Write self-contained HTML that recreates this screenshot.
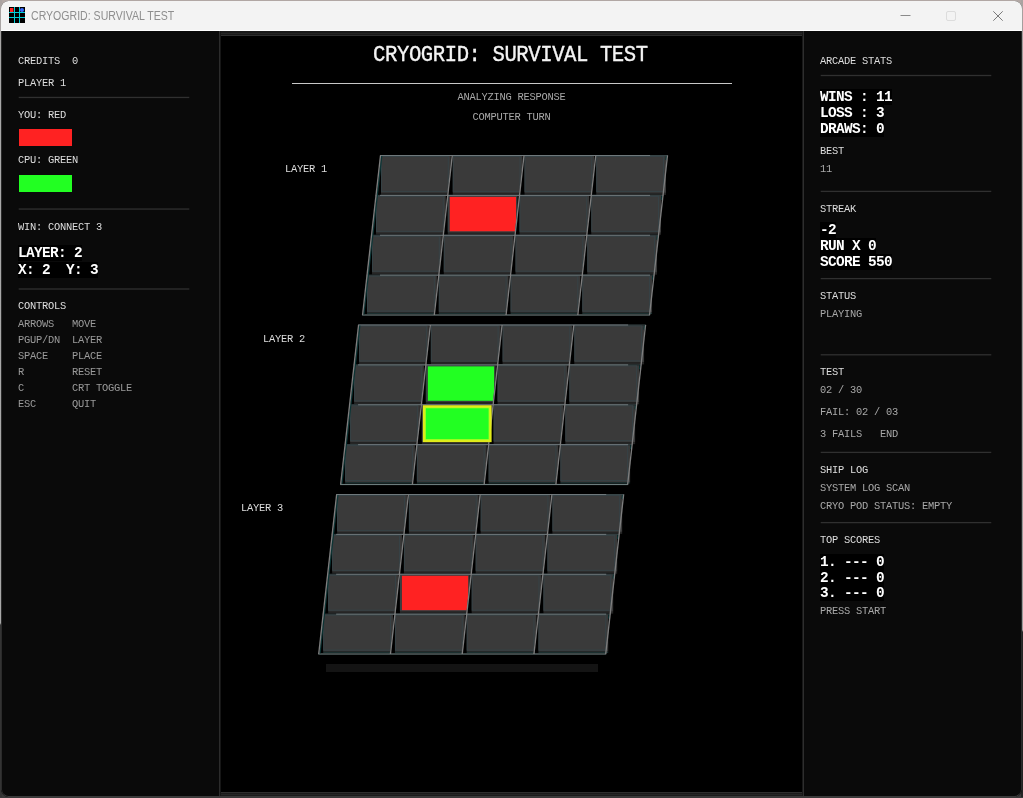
<!DOCTYPE html>
<html><head><meta charset="utf-8"><title>CRYOGRID: SURVIVAL TEST</title>
<style>
html,body{margin:0;padding:0}
body{width:1023px;height:798px;overflow:hidden;position:relative;
 background:#3a3a3a;
 font-family:"Liberation Mono",monospace;}
.win{position:absolute;left:1px;top:1px;width:1021px;height:796px;border-radius:7.5px;overflow:hidden;background:#0a0a0a}
.tb{position:absolute;left:0;top:0;width:1021px;height:29px;background:#f3f3f3;border-bottom:1px solid #fff}
.tt{position:absolute;left:30px;top:0;height:29px;line-height:30px;font-family:"Liberation Sans",sans-serif;font-size:12px;color:#8e8e8e;white-space:pre;transform:scaleX(0.88);transform-origin:0 0}
.edge{position:absolute;left:0;top:30px;width:1021px;height:766px;box-sizing:border-box;border-left:1px solid #2b2b2b;border-right:1px solid #2b2b2b;border-bottom:1px solid #3b3b3b;border-radius:0 0 7.5px 7.5px;pointer-events:none}
.t{position:absolute;white-space:pre;height:16px;line-height:16px;font-size:10.4px;letter-spacing:-0.24px;color:#dedede}
.t,.b,.tt{filter:grayscale(1)}
.g{color:#a8a8a8}
.d{color:#9a9a9a}
.b{position:absolute;white-space:pre;height:16px;line-height:17px;overflow:hidden;font-size:14.4px;letter-spacing:-0.64px;font-weight:bold;color:#fff;background:#000}
.hr{position:absolute;height:1px;background:#2e2e2e}
.c{position:absolute;left:218px;top:30px;width:585px;height:765px;background:#000}
</style></head><body>
<div style="position:absolute;left:0;top:0;width:1023px;height:12px;background:#b1a7a4"></div>
<div style="position:absolute;left:0;top:0;width:2px;height:797px;background:linear-gradient(180deg,#aaa3a1 0,#a8a8a8 60px,#a9a9a9 623px,#343434 625px,#343434 100%)"></div>
<div style="position:absolute;left:1021px;top:0;width:2px;height:797px;background:linear-gradient(180deg,#aaa3a1 0,#9c9898 60px,#9a9a9a 630px,#242424 632px,#242424 100%)"></div>
<div class="win">

<div class="tb">
<svg style="position:absolute;left:8px;top:6px" width="16" height="16" viewBox="0 0 16 16" shape-rendering="crispEdges">
<rect width="16" height="16" fill="#000"/>
<rect x="1" y="1" width="3.4" height="4" fill="#ff2222" shape-rendering="auto"/>
<circle cx="13" cy="3" r="2" fill="#3a6cff" shape-rendering="auto"/>
<rect x="5" y="0" width="1" height="16" fill="#00cfd8"/><rect x="10" y="0" width="1" height="16" fill="#00cfd8"/>
<rect x="0" y="5" width="16" height="1" fill="#00cfd8"/><rect x="0" y="10" width="16" height="1" fill="#00cfd8"/>
</svg>
<div class="tt">CRYOGRID: SURVIVAL TEST</div>
<svg style="position:absolute;left:880px;top:0" width="141" height="29" viewBox="0 0 141 29" fill="none">
<path d="M19.5 14.5 H29.5" stroke="#8a8a8a" stroke-width="1"/>
<rect x="65.5" y="10.5" width="9" height="9" rx="1.5" stroke="#dcdcdc" stroke-width="1"/>
<path d="M112.3 10.3 L121.7 19.7 M121.7 10.3 L112.3 19.7" stroke="#7a7a7a" stroke-width="1"/>
</svg>
</div>
<div class="c">
<svg style="position:absolute;left:0;top:0" width="585" height="765" viewBox="219 31 585 765" shape-rendering="crispEdges">
<rect x="219" y="31" width="585" height="5" fill="#1b1b1b"/>
<rect x="219" y="33" width="585" height="1" fill="#252525"/>
<rect x="219" y="35" width="585" height="1" fill="#2e2e2e"/>
<rect x="219" y="792" width="585" height="4" fill="#1b1b1b"/>
<rect x="219" y="792" width="585" height="1" fill="#2e2e2e"/>
<rect x="219" y="794" width="585" height="1" fill="#252525"/>
<rect x="219" y="31" width="1" height="765" fill="#2c2c2c"/>
<rect x="220" y="31" width="1" height="765" fill="#161616"/>
<rect x="803" y="31" width="1" height="765" fill="#2e2e2e"/>
<rect x="802" y="31" width="1" height="765" fill="#181818"/>
<rect x="292" y="83" width="440" height="1" fill="#c8c8c8"/>
<rect x="326" y="664" width="272" height="8" fill="#141414"/>
<g shape-rendering="geometricPrecision" transform="translate(380 155) scale(0.99653 0.99706) translate(-380 -155)">
<polygon points="380,155 453,155 448.5,196 375.5,196" fill="#000"/>
<rect x="381" y="193" width="70" height="2" fill="#252525"/>
<rect x="381" y="156" width="70" height="37" fill="#3a3a3a"/>
<rect x="381" y="156" width="68" height="36" fill="#364246"/>
<rect x="382" y="157" width="66" height="34" fill="#3a3a3a"/>
<polygon points="452,155 525,155 520.5,196 447.5,196" fill="#000"/>
<rect x="453" y="193" width="70" height="2" fill="#252525"/>
<rect x="453" y="156" width="70" height="37" fill="#3a3a3a"/>
<rect x="453" y="156" width="68" height="36" fill="#364246"/>
<rect x="454" y="157" width="66" height="34" fill="#3a3a3a"/>
<polygon points="524,155 597,155 592.5,196 519.5,196" fill="#000"/>
<rect x="525" y="193" width="70" height="2" fill="#252525"/>
<rect x="525" y="156" width="70" height="37" fill="#3a3a3a"/>
<rect x="525" y="156" width="68" height="36" fill="#364246"/>
<rect x="526" y="157" width="66" height="34" fill="#3a3a3a"/>
<polygon points="596,155 669,155 664.5,196 591.5,196" fill="#000"/>
<rect x="597" y="193" width="70" height="2" fill="#252525"/>
<rect x="597" y="156" width="70" height="37" fill="#3a3a3a"/>
<rect x="597" y="156" width="68" height="36" fill="#364246"/>
<rect x="598" y="157" width="66" height="34" fill="#3a3a3a"/>
<rect x="380" y="155" width="289" height="1" fill="#394648"/>
<rect x="380" y="155" width="271" height="1" fill="#70797c"/>
<polygon points="375.5,195 448.5,195 444,236 371,236" fill="#000"/>
<rect x="376" y="233" width="70" height="2" fill="#252525"/>
<rect x="376" y="196" width="70" height="37" fill="#3a3a3a"/>
<rect x="376" y="196" width="68" height="36" fill="#364246"/>
<rect x="377" y="197" width="66" height="34" fill="#3a3a3a"/>
<polygon points="447.5,195 520.5,195 516,236 443,236" fill="#000"/>
<rect x="448" y="233" width="70" height="2" fill="#252525"/>
<rect x="448" y="196" width="70" height="37" fill="#3a3a3a"/>
<rect x="448" y="196" width="68" height="36" fill="#364246"/>
<rect x="449" y="197" width="66" height="34" fill="#3a3a3a"/>
<rect x="450" y="197" width="66.5" height="34.5" fill="#ff2222"/>
<polygon points="519.5,195 592.5,195 588,236 515,236" fill="#000"/>
<rect x="520" y="233" width="70" height="2" fill="#252525"/>
<rect x="520" y="196" width="70" height="37" fill="#3a3a3a"/>
<rect x="520" y="196" width="68" height="36" fill="#364246"/>
<rect x="521" y="197" width="66" height="34" fill="#3a3a3a"/>
<polygon points="591.5,195 664.5,195 660,236 587,236" fill="#000"/>
<rect x="592" y="233" width="70" height="2" fill="#252525"/>
<rect x="592" y="196" width="70" height="37" fill="#3a3a3a"/>
<rect x="592" y="196" width="68" height="36" fill="#364246"/>
<rect x="593" y="197" width="66" height="34" fill="#3a3a3a"/>
<rect x="375.5" y="195" width="289" height="1" fill="#394648"/>
<rect x="380" y="195" width="271" height="1" fill="#70797c"/>
<polygon points="371,235 444,235 439.5,276 366.5,276" fill="#000"/>
<rect x="372" y="273" width="70" height="2" fill="#252525"/>
<rect x="372" y="236" width="70" height="37" fill="#3a3a3a"/>
<rect x="372" y="236" width="68" height="36" fill="#364246"/>
<rect x="373" y="237" width="66" height="34" fill="#3a3a3a"/>
<polygon points="443,235 516,235 511.5,276 438.5,276" fill="#000"/>
<rect x="444" y="273" width="70" height="2" fill="#252525"/>
<rect x="444" y="236" width="70" height="37" fill="#3a3a3a"/>
<rect x="444" y="236" width="68" height="36" fill="#364246"/>
<rect x="445" y="237" width="66" height="34" fill="#3a3a3a"/>
<polygon points="515,235 588,235 583.5,276 510.5,276" fill="#000"/>
<rect x="516" y="273" width="70" height="2" fill="#252525"/>
<rect x="516" y="236" width="70" height="37" fill="#3a3a3a"/>
<rect x="516" y="236" width="68" height="36" fill="#364246"/>
<rect x="517" y="237" width="66" height="34" fill="#3a3a3a"/>
<polygon points="587,235 660,235 655.5,276 582.5,276" fill="#000"/>
<rect x="588" y="273" width="70" height="2" fill="#252525"/>
<rect x="588" y="236" width="70" height="37" fill="#3a3a3a"/>
<rect x="588" y="236" width="68" height="36" fill="#364246"/>
<rect x="589" y="237" width="66" height="34" fill="#3a3a3a"/>
<rect x="371" y="235" width="289" height="1" fill="#394648"/>
<rect x="380" y="235" width="271" height="1" fill="#70797c"/>
<polygon points="366.5,275 439.5,275 435,316 362,316" fill="#000"/>
<rect x="367" y="313" width="70" height="1.5" fill="#1c3030"/>
<rect x="367" y="276" width="70" height="37" fill="#3a3a3a"/>
<rect x="367" y="276" width="68" height="36" fill="#364246"/>
<rect x="368" y="277" width="66" height="34" fill="#3a3a3a"/>
<polygon points="438.5,275 511.5,275 507,316 434,316" fill="#000"/>
<rect x="439" y="313" width="70" height="1.5" fill="#1c3030"/>
<rect x="439" y="276" width="70" height="37" fill="#3a3a3a"/>
<rect x="439" y="276" width="68" height="36" fill="#364246"/>
<rect x="440" y="277" width="66" height="34" fill="#3a3a3a"/>
<polygon points="510.5,275 583.5,275 579,316 506,316" fill="#000"/>
<rect x="511" y="313" width="70" height="1.5" fill="#1c3030"/>
<rect x="511" y="276" width="70" height="37" fill="#3a3a3a"/>
<rect x="511" y="276" width="68" height="36" fill="#364246"/>
<rect x="512" y="277" width="66" height="34" fill="#3a3a3a"/>
<polygon points="582.5,275 655.5,275 651,316 578,316" fill="#000"/>
<rect x="583" y="313" width="70" height="1.5" fill="#1c3030"/>
<rect x="583" y="276" width="70" height="37" fill="#3a3a3a"/>
<rect x="583" y="276" width="68" height="36" fill="#364246"/>
<rect x="584" y="277" width="66" height="34" fill="#3a3a3a"/>
<rect x="366.5" y="275" width="289" height="1" fill="#394648"/>
<rect x="380" y="275" width="271" height="1" fill="#70797c"/>
<rect x="362" y="314.9" width="289" height="1.15" fill="#6c7c7c"/>
<line x1="381.7" y1="156" x2="363.7" y2="315" stroke="#0c3434" stroke-width="1.4"/>
<line x1="380.5" y1="155.5" x2="362.5" y2="315.5" stroke="#7e7e7e" stroke-width="1.35"/>
<line x1="452.5" y1="155.5" x2="434.5" y2="315.5" stroke="#7e7e7e" stroke-width="1.35"/>
<line x1="524.5" y1="155.5" x2="506.5" y2="315.5" stroke="#7e7e7e" stroke-width="1.35"/>
<line x1="596.5" y1="155.5" x2="578.5" y2="315.5" stroke="#7e7e7e" stroke-width="1.35"/>
<line x1="667.4" y1="156" x2="666.95" y2="160" stroke="#0c3434" stroke-width="1.4"/>
<line x1="662.9" y1="196" x2="662.45" y2="200" stroke="#0c3434" stroke-width="1.4"/>
<line x1="658.4" y1="236" x2="657.95" y2="240" stroke="#0c3434" stroke-width="1.4"/>
<line x1="653.9" y1="276" x2="653.45" y2="280" stroke="#0c3434" stroke-width="1.4"/>
<line x1="668.5" y1="155.5" x2="650.5" y2="315.5" stroke="#7e7e7e" stroke-width="1.35"/>
<polygon points="358,325 431,325 426.5,366 353.5,366" fill="#000"/>
<rect x="359" y="363" width="70" height="2" fill="#252525"/>
<rect x="359" y="326" width="70" height="37" fill="#3a3a3a"/>
<rect x="359" y="326" width="68" height="36" fill="#364246"/>
<rect x="360" y="327" width="66" height="34" fill="#3a3a3a"/>
<polygon points="430,325 503,325 498.5,366 425.5,366" fill="#000"/>
<rect x="431" y="363" width="70" height="2" fill="#252525"/>
<rect x="431" y="326" width="70" height="37" fill="#3a3a3a"/>
<rect x="431" y="326" width="68" height="36" fill="#364246"/>
<rect x="432" y="327" width="66" height="34" fill="#3a3a3a"/>
<polygon points="502,325 575,325 570.5,366 497.5,366" fill="#000"/>
<rect x="503" y="363" width="70" height="2" fill="#252525"/>
<rect x="503" y="326" width="70" height="37" fill="#3a3a3a"/>
<rect x="503" y="326" width="68" height="36" fill="#364246"/>
<rect x="504" y="327" width="66" height="34" fill="#3a3a3a"/>
<polygon points="574,325 647,325 642.5,366 569.5,366" fill="#000"/>
<rect x="575" y="363" width="70" height="2" fill="#252525"/>
<rect x="575" y="326" width="70" height="37" fill="#3a3a3a"/>
<rect x="575" y="326" width="68" height="36" fill="#364246"/>
<rect x="576" y="327" width="66" height="34" fill="#3a3a3a"/>
<rect x="358" y="325" width="289" height="1" fill="#394648"/>
<rect x="358" y="325" width="271" height="1" fill="#70797c"/>
<polygon points="353.5,365 426.5,365 422,406 349,406" fill="#000"/>
<rect x="354" y="403" width="70" height="2" fill="#252525"/>
<rect x="354" y="366" width="70" height="37" fill="#3a3a3a"/>
<rect x="354" y="366" width="68" height="36" fill="#364246"/>
<rect x="355" y="367" width="66" height="34" fill="#3a3a3a"/>
<polygon points="425.5,365 498.5,365 494,406 421,406" fill="#000"/>
<rect x="426" y="403" width="70" height="2" fill="#252525"/>
<rect x="426" y="366" width="70" height="37" fill="#3a3a3a"/>
<rect x="426" y="366" width="68" height="36" fill="#364246"/>
<rect x="427" y="367" width="66" height="34" fill="#3a3a3a"/>
<rect x="428" y="367" width="66.5" height="34.5" fill="#22ff22"/>
<polygon points="497.5,365 570.5,365 566,406 493,406" fill="#000"/>
<rect x="498" y="403" width="70" height="2" fill="#252525"/>
<rect x="498" y="366" width="70" height="37" fill="#3a3a3a"/>
<rect x="498" y="366" width="68" height="36" fill="#364246"/>
<rect x="499" y="367" width="66" height="34" fill="#3a3a3a"/>
<polygon points="569.5,365 642.5,365 638,406 565,406" fill="#000"/>
<rect x="570" y="403" width="70" height="2" fill="#252525"/>
<rect x="570" y="366" width="70" height="37" fill="#3a3a3a"/>
<rect x="570" y="366" width="68" height="36" fill="#364246"/>
<rect x="571" y="367" width="66" height="34" fill="#3a3a3a"/>
<rect x="353.5" y="365" width="289" height="1" fill="#394648"/>
<rect x="358" y="365" width="271" height="1" fill="#70797c"/>
<polygon points="349,405 422,405 417.5,446 344.5,446" fill="#000"/>
<rect x="350" y="443" width="70" height="2" fill="#252525"/>
<rect x="350" y="406" width="70" height="37" fill="#3a3a3a"/>
<rect x="350" y="406" width="68" height="36" fill="#364246"/>
<rect x="351" y="407" width="66" height="34" fill="#3a3a3a"/>
<polygon points="421,405 494,405 489.5,446 416.5,446" fill="#000"/>
<rect x="422" y="443" width="70" height="2" fill="#252525"/>
<rect x="422" y="406" width="70" height="37" fill="#3a3a3a"/>
<rect x="422" y="406" width="68" height="36" fill="#364246"/>
<rect x="423" y="407" width="66" height="34" fill="#3a3a3a"/>
<polygon points="493,405 566,405 561.5,446 488.5,446" fill="#000"/>
<rect x="494" y="443" width="70" height="2" fill="#252525"/>
<rect x="494" y="406" width="70" height="37" fill="#3a3a3a"/>
<rect x="494" y="406" width="68" height="36" fill="#364246"/>
<rect x="495" y="407" width="66" height="34" fill="#3a3a3a"/>
<polygon points="565,405 638,405 633.5,446 560.5,446" fill="#000"/>
<rect x="566" y="443" width="70" height="2" fill="#252525"/>
<rect x="566" y="406" width="70" height="37" fill="#3a3a3a"/>
<rect x="566" y="406" width="68" height="36" fill="#364246"/>
<rect x="567" y="407" width="66" height="34" fill="#3a3a3a"/>
<rect x="349" y="405" width="289" height="1" fill="#394648"/>
<rect x="358" y="405" width="271" height="1" fill="#70797c"/>
<polygon points="344.5,445 417.5,445 413,486 340,486" fill="#000"/>
<rect x="345" y="483" width="70" height="1.5" fill="#1c3030"/>
<rect x="345" y="446" width="70" height="37" fill="#3a3a3a"/>
<rect x="345" y="446" width="68" height="36" fill="#364246"/>
<rect x="346" y="447" width="66" height="34" fill="#3a3a3a"/>
<polygon points="416.5,445 489.5,445 485,486 412,486" fill="#000"/>
<rect x="417" y="483" width="70" height="1.5" fill="#1c3030"/>
<rect x="417" y="446" width="70" height="37" fill="#3a3a3a"/>
<rect x="417" y="446" width="68" height="36" fill="#364246"/>
<rect x="418" y="447" width="66" height="34" fill="#3a3a3a"/>
<polygon points="488.5,445 561.5,445 557,486 484,486" fill="#000"/>
<rect x="489" y="483" width="70" height="1.5" fill="#1c3030"/>
<rect x="489" y="446" width="70" height="37" fill="#3a3a3a"/>
<rect x="489" y="446" width="68" height="36" fill="#364246"/>
<rect x="490" y="447" width="66" height="34" fill="#3a3a3a"/>
<polygon points="560.5,445 633.5,445 629,486 556,486" fill="#000"/>
<rect x="561" y="483" width="70" height="1.5" fill="#1c3030"/>
<rect x="561" y="446" width="70" height="37" fill="#3a3a3a"/>
<rect x="561" y="446" width="68" height="36" fill="#364246"/>
<rect x="562" y="447" width="66" height="34" fill="#3a3a3a"/>
<rect x="344.5" y="445" width="289" height="1" fill="#394648"/>
<rect x="358" y="445" width="271" height="1" fill="#70797c"/>
<rect x="340" y="484.9" width="289" height="1.15" fill="#6c7c7c"/>
<line x1="359.7" y1="326" x2="341.7" y2="485" stroke="#0c3434" stroke-width="1.4"/>
<line x1="358.5" y1="325.5" x2="340.5" y2="485.5" stroke="#7e7e7e" stroke-width="1.35"/>
<line x1="430.5" y1="325.5" x2="412.5" y2="485.5" stroke="#7e7e7e" stroke-width="1.35"/>
<line x1="502.5" y1="325.5" x2="484.5" y2="485.5" stroke="#7e7e7e" stroke-width="1.35"/>
<line x1="574.5" y1="325.5" x2="556.5" y2="485.5" stroke="#7e7e7e" stroke-width="1.35"/>
<line x1="645.4" y1="326" x2="644.95" y2="330" stroke="#0c3434" stroke-width="1.4"/>
<line x1="640.9" y1="366" x2="640.45" y2="370" stroke="#0c3434" stroke-width="1.4"/>
<line x1="636.4" y1="406" x2="635.95" y2="410" stroke="#0c3434" stroke-width="1.4"/>
<line x1="631.9" y1="446" x2="631.45" y2="450" stroke="#0c3434" stroke-width="1.4"/>
<line x1="646.5" y1="325.5" x2="628.5" y2="485.5" stroke="#7e7e7e" stroke-width="1.35"/>
<rect x="423" y="406" width="69" height="37" fill="#e2ea1a"/>
<rect x="425" y="408" width="65" height="33" fill="#b0ff20"/>
<rect x="426" y="409" width="63" height="31" fill="#22ff22"/>
<polygon points="336,495 409,495 404.5,536 331.5,536" fill="#000"/>
<rect x="337" y="533" width="70" height="2" fill="#252525"/>
<rect x="337" y="496" width="70" height="37" fill="#3a3a3a"/>
<rect x="337" y="496" width="68" height="36" fill="#364246"/>
<rect x="338" y="497" width="66" height="34" fill="#3a3a3a"/>
<polygon points="408,495 481,495 476.5,536 403.5,536" fill="#000"/>
<rect x="409" y="533" width="70" height="2" fill="#252525"/>
<rect x="409" y="496" width="70" height="37" fill="#3a3a3a"/>
<rect x="409" y="496" width="68" height="36" fill="#364246"/>
<rect x="410" y="497" width="66" height="34" fill="#3a3a3a"/>
<polygon points="480,495 553,495 548.5,536 475.5,536" fill="#000"/>
<rect x="481" y="533" width="70" height="2" fill="#252525"/>
<rect x="481" y="496" width="70" height="37" fill="#3a3a3a"/>
<rect x="481" y="496" width="68" height="36" fill="#364246"/>
<rect x="482" y="497" width="66" height="34" fill="#3a3a3a"/>
<polygon points="552,495 625,495 620.5,536 547.5,536" fill="#000"/>
<rect x="553" y="533" width="70" height="2" fill="#252525"/>
<rect x="553" y="496" width="70" height="37" fill="#3a3a3a"/>
<rect x="553" y="496" width="68" height="36" fill="#364246"/>
<rect x="554" y="497" width="66" height="34" fill="#3a3a3a"/>
<rect x="336" y="495" width="289" height="1" fill="#394648"/>
<rect x="336" y="495" width="271" height="1" fill="#70797c"/>
<polygon points="331.5,535 404.5,535 400,576 327,576" fill="#000"/>
<rect x="332" y="573" width="70" height="2" fill="#252525"/>
<rect x="332" y="536" width="70" height="37" fill="#3a3a3a"/>
<rect x="332" y="536" width="68" height="36" fill="#364246"/>
<rect x="333" y="537" width="66" height="34" fill="#3a3a3a"/>
<polygon points="403.5,535 476.5,535 472,576 399,576" fill="#000"/>
<rect x="404" y="573" width="70" height="2" fill="#252525"/>
<rect x="404" y="536" width="70" height="37" fill="#3a3a3a"/>
<rect x="404" y="536" width="68" height="36" fill="#364246"/>
<rect x="405" y="537" width="66" height="34" fill="#3a3a3a"/>
<polygon points="475.5,535 548.5,535 544,576 471,576" fill="#000"/>
<rect x="476" y="573" width="70" height="2" fill="#252525"/>
<rect x="476" y="536" width="70" height="37" fill="#3a3a3a"/>
<rect x="476" y="536" width="68" height="36" fill="#364246"/>
<rect x="477" y="537" width="66" height="34" fill="#3a3a3a"/>
<polygon points="547.5,535 620.5,535 616,576 543,576" fill="#000"/>
<rect x="548" y="573" width="70" height="2" fill="#252525"/>
<rect x="548" y="536" width="70" height="37" fill="#3a3a3a"/>
<rect x="548" y="536" width="68" height="36" fill="#364246"/>
<rect x="549" y="537" width="66" height="34" fill="#3a3a3a"/>
<rect x="331.5" y="535" width="289" height="1" fill="#394648"/>
<rect x="336" y="535" width="271" height="1" fill="#70797c"/>
<polygon points="327,575 400,575 395.5,616 322.5,616" fill="#000"/>
<rect x="328" y="613" width="70" height="2" fill="#252525"/>
<rect x="328" y="576" width="70" height="37" fill="#3a3a3a"/>
<rect x="328" y="576" width="68" height="36" fill="#364246"/>
<rect x="329" y="577" width="66" height="34" fill="#3a3a3a"/>
<polygon points="399,575 472,575 467.5,616 394.5,616" fill="#000"/>
<rect x="400" y="613" width="70" height="2" fill="#252525"/>
<rect x="400" y="576" width="70" height="37" fill="#3a3a3a"/>
<rect x="400" y="576" width="68" height="36" fill="#364246"/>
<rect x="401" y="577" width="66" height="34" fill="#3a3a3a"/>
<rect x="402" y="577" width="66.5" height="34.5" fill="#ff2222"/>
<polygon points="471,575 544,575 539.5,616 466.5,616" fill="#000"/>
<rect x="472" y="613" width="70" height="2" fill="#252525"/>
<rect x="472" y="576" width="70" height="37" fill="#3a3a3a"/>
<rect x="472" y="576" width="68" height="36" fill="#364246"/>
<rect x="473" y="577" width="66" height="34" fill="#3a3a3a"/>
<polygon points="543,575 616,575 611.5,616 538.5,616" fill="#000"/>
<rect x="544" y="613" width="70" height="2" fill="#252525"/>
<rect x="544" y="576" width="70" height="37" fill="#3a3a3a"/>
<rect x="544" y="576" width="68" height="36" fill="#364246"/>
<rect x="545" y="577" width="66" height="34" fill="#3a3a3a"/>
<rect x="327" y="575" width="289" height="1" fill="#394648"/>
<rect x="336" y="575" width="271" height="1" fill="#70797c"/>
<polygon points="322.5,615 395.5,615 391,656 318,656" fill="#000"/>
<rect x="323" y="653" width="70" height="1.5" fill="#1c3030"/>
<rect x="323" y="616" width="70" height="37" fill="#3a3a3a"/>
<rect x="323" y="616" width="68" height="36" fill="#364246"/>
<rect x="324" y="617" width="66" height="34" fill="#3a3a3a"/>
<polygon points="394.5,615 467.5,615 463,656 390,656" fill="#000"/>
<rect x="395" y="653" width="70" height="1.5" fill="#1c3030"/>
<rect x="395" y="616" width="70" height="37" fill="#3a3a3a"/>
<rect x="395" y="616" width="68" height="36" fill="#364246"/>
<rect x="396" y="617" width="66" height="34" fill="#3a3a3a"/>
<polygon points="466.5,615 539.5,615 535,656 462,656" fill="#000"/>
<rect x="467" y="653" width="70" height="1.5" fill="#1c3030"/>
<rect x="467" y="616" width="70" height="37" fill="#3a3a3a"/>
<rect x="467" y="616" width="68" height="36" fill="#364246"/>
<rect x="468" y="617" width="66" height="34" fill="#3a3a3a"/>
<polygon points="538.5,615 611.5,615 607,656 534,656" fill="#000"/>
<rect x="539" y="653" width="70" height="1.5" fill="#1c3030"/>
<rect x="539" y="616" width="70" height="37" fill="#3a3a3a"/>
<rect x="539" y="616" width="68" height="36" fill="#364246"/>
<rect x="540" y="617" width="66" height="34" fill="#3a3a3a"/>
<rect x="322.5" y="615" width="289" height="1" fill="#394648"/>
<rect x="336" y="615" width="271" height="1" fill="#70797c"/>
<rect x="318" y="654.9" width="289" height="1.15" fill="#6c7c7c"/>
<line x1="337.7" y1="496" x2="319.7" y2="655" stroke="#0c3434" stroke-width="1.4"/>
<line x1="336.5" y1="495.5" x2="318.5" y2="655.5" stroke="#7e7e7e" stroke-width="1.35"/>
<line x1="408.5" y1="495.5" x2="390.5" y2="655.5" stroke="#7e7e7e" stroke-width="1.35"/>
<line x1="480.5" y1="495.5" x2="462.5" y2="655.5" stroke="#7e7e7e" stroke-width="1.35"/>
<line x1="552.5" y1="495.5" x2="534.5" y2="655.5" stroke="#7e7e7e" stroke-width="1.35"/>
<line x1="623.4" y1="496" x2="622.95" y2="500" stroke="#0c3434" stroke-width="1.4"/>
<line x1="618.9" y1="536" x2="618.45" y2="540" stroke="#0c3434" stroke-width="1.4"/>
<line x1="614.4" y1="576" x2="613.95" y2="580" stroke="#0c3434" stroke-width="1.4"/>
<line x1="609.9" y1="616" x2="609.45" y2="620" stroke="#0c3434" stroke-width="1.4"/>
<line x1="624.5" y1="495.5" x2="606.5" y2="655.5" stroke="#7e7e7e" stroke-width="1.35"/>
</g>
</svg>
</div>
<div class="t" style="left:218px;width:585px;text-align:center;top:41px;height:26px;line-height:26px;font-size:20.6px;letter-spacing:-0.42px;color:#f4f4f4;-webkit-text-stroke:0.35px #f4f4f4;transform:translate(-1.1px,0.9px) scaleY(1.1);transform-origin:50% 50%">CRYOGRID: SURVIVAL TEST</div>
<div class="t g" style="left:218px;width:585px;text-align:center;top:88px">ANALYZING RESPONSE</div>
<div class="t g" style="left:218px;width:585px;text-align:center;top:108px">COMPUTER TURN</div>
<div class="t" style="left:284px;top:160px">LAYER 1</div>
<div class="t" style="left:262px;top:330px">LAYER 2</div>
<div class="t" style="left:240px;top:499px">LAYER 3</div>
<div class="t" style="left:17px;top:52px">CREDITS  0</div>
<div class="t" style="left:17px;top:74px">PLAYER 1</div>
<div class="t" style="left:17px;top:106px">YOU: RED</div>
<div style="position:absolute;left:18px;top:128px;width:53px;height:17px;background:#ff2222"></div>
<div class="t" style="left:17px;top:151px">CPU: GREEN</div>
<div style="position:absolute;left:18px;top:174px;width:53px;height:17px;background:#22ff22"></div>
<div class="t" style="left:17px;top:218px">WIN: CONNECT 3</div>
<div class="b" style="left:17px;top:244px;width:64px">LAYER: 2</div>
<div class="b" style="left:17px;top:261px;width:80px">X: 2  Y: 3</div>
<div class="t" style="left:17px;top:297px">CONTROLS</div>
<div class="t d" style="left:17px;top:315px">ARROWS   MOVE</div>
<div class="t d" style="left:17px;top:331px">PGUP/DN  LAYER</div>
<div class="t d" style="left:17px;top:347px">SPACE    PLACE</div>
<div class="t d" style="left:17px;top:363px">R        RESET</div>
<div class="t d" style="left:17px;top:379px">C        CRT TOGGLE</div>
<div class="t d" style="left:17px;top:395px">ESC      QUIT</div>
<div class="t" style="left:819px;top:52px">ARCADE STATS</div>
<div class="b" style="left:819px;top:88px;width:72px">WINS : 11</div>
<div class="b" style="left:819px;top:104px;width:64px">LOSS : 3</div>
<div class="b" style="left:819px;top:120px;width:64px">DRAWS: 0</div>
<div class="t" style="left:819px;top:142px">BEST</div>
<div class="t g" style="left:819px;top:160px">11</div>
<div class="t" style="left:819px;top:200px">STREAK</div>
<div class="b" style="left:819px;top:221px;width:16px">-2</div>
<div class="b" style="left:819px;top:237px;width:56px">RUN X 0</div>
<div class="b" style="left:819px;top:253px;width:72px">SCORE 550</div>
<div class="t" style="left:819px;top:287px">STATUS</div>
<div class="t g" style="left:819px;top:305px">PLAYING</div>
<div class="t" style="left:819px;top:363px">TEST</div>
<div class="t g" style="left:819px;top:381px">02 / 30</div>
<div class="t g" style="left:819px;top:403px">FAIL: 02 / 03</div>
<div class="t g" style="left:819px;top:425px">3 FAILS   END</div>
<div class="t" style="left:819px;top:461px">SHIP LOG</div>
<div class="t g" style="left:819px;top:479px">SYSTEM LOG SCAN</div>
<div class="t g" style="left:819px;top:497px">CRYO POD STATUS: EMPTY</div>
<div class="t" style="left:819px;top:531px">TOP SCORES</div>
<div class="b" style="left:819px;top:553px;width:64px">1. --- 0</div>
<div class="b" style="left:819px;top:569px;width:64px">2. --- 0</div>
<div class="b" style="left:819px;top:584px;width:64px">3. --- 0</div>
<div class="t g" style="left:819px;top:602px">PRESS START</div>
<svg style="position:absolute;left:-1px;top:-1px;pointer-events:none" width="1023" height="798" viewBox="0 0 1023 798" shape-rendering="geometricPrecision">
<rect x="18.7" y="96.8" width="170.6" height="1.3" fill="#303030"/>
<rect x="18.7" y="208.4" width="170.6" height="1.3" fill="#303030"/>
<rect x="18.7" y="288.35" width="170.6" height="1.3" fill="#303030"/>
<rect x="820.7" y="74.85" width="170.6" height="1.3" fill="#303030"/>
<rect x="820.7" y="190.75" width="170.6" height="1.3" fill="#303030"/>
<rect x="820.7" y="277.95" width="170.6" height="1.3" fill="#303030"/>
<rect x="820.7" y="354.15" width="170.6" height="1.3" fill="#303030"/>
<rect x="820.7" y="451.75" width="170.6" height="1.3" fill="#303030"/>
<rect x="820.7" y="521.95" width="170.6" height="1.3" fill="#303030"/>
</svg>
<div class="edge"></div>
</div></body></html>
